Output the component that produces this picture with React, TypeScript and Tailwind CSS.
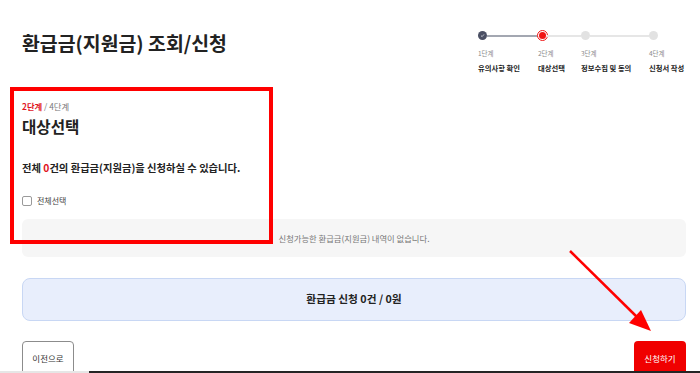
import React from "react";

const STEPS = [
  { num: "1단계", name: "유의사항 확인", w: "w-[60px]", state: "done" },
  { num: "2단계", name: "대상선택", w: "w-[43px]", state: "current" },
  { num: "3단계", name: "정보수집 및 동의", w: "w-[68px]", state: "todo" },
  { num: "4단계", name: "신청서 작성", w: "w-[38px]", state: "todo" },
];

function StepDot({ state }: { state: string }) {
  if (state === "done") {
    return (
      <div className="w-[9px] h-[9px] rounded-full bg-[#4b5064] flex items-center justify-center shrink-0">
        <svg width="5" height="5" viewBox="0 0 10 10">
          <path d="M2 5.2 L4.2 7.3 L8 2.8" fill="none" stroke="#c8ccd6" strokeWidth="1.8" />
        </svg>
      </div>
    );
  }
  if (state === "current") {
    return (
      <div className="w-[9px] h-[9px] flex items-center justify-center shrink-0">
        <div className="w-[11px] h-[11px] shrink-0 rounded-full border border-[#f01515] bg-white flex items-center justify-center">
          <div className="w-[7px] h-[7px] rounded-full bg-[#f01515]" />
        </div>
      </div>
    );
  }
  return <div className="w-[9px] h-[9px] rounded-full bg-[#e2e2e2] shrink-0" />;
}

function Stepper() {
  return (
    <div className="flex mt-[1px] mr-[-1px]">
      {STEPS.map((s, i) => (
        <div key={s.num} className={`${s.w} flex flex-col`}>
          <div className="h-[11px] flex items-center">
            <StepDot state={s.state} />
            {i < STEPS.length - 1 && (
              <div className={`flex-1 h-[2px] ${i === 0 ? "bg-[#a3a7b1]" : "bg-[#e6e6e6]"}`} />
            )}
          </div>
          <div className="mt-[6px] text-[6.5px] leading-[12px] text-[#8a8a8a] whitespace-nowrap">{s.num}</div>
          <div className="mt-[2px] text-[7.3px] leading-[14px] font-bold text-[#222] whitespace-nowrap">{s.name}</div>
        </div>
      ))}
    </div>
  );
}

export default function App() {
  return (
    <div className="relative w-[700px] h-[373px] overflow-hidden bg-white text-[#222] font-['Noto_Sans_CJK_KR','Noto_Sans',sans-serif]">
      <div className="pl-[22px] pr-[14px] pt-[29px]">
        {/* header */}
        <div className="flex justify-between items-start">
          <h1 className="text-[19.4px] leading-[28px] font-bold text-[#222]">
            환급금(지원금) 조회/신청
          </h1>
          <Stepper />
        </div>

        {/* step content */}
        <div className="mt-[25px] text-[8.3px] leading-[12px] text-[#777]">
          <span className="font-bold text-[#e0141e]">2단계</span> / 4단계
        </div>
        <h2 className="mt-[4px] text-[15.6px] leading-[20px] font-bold">대상선택</h2>

        <p className="mt-[25px] text-[10.3px] leading-[14px] font-bold">
          전체 <span className="text-[#e0141e]">0</span>건의 환급금(지원금)을 신청하실 수 있습니다.
        </p>

        <label className="mt-[20px] flex items-center h-[12px] gap-[5px]">
          <span className="w-[10px] h-[10px] rounded-[2px] border border-[#9a9a9a] bg-white" />
          <span className="text-[8px] leading-[12px] text-[#444]">전체선택</span>
        </label>

        <div className="mt-[12px] h-[38px] rounded-[6px] bg-[#f6f6f6] flex items-center justify-center">
          <span className="text-[8.3px] text-[#777]">신청가능한 환급금(지원금) 내역이 없습니다.</span>
        </div>

        <div className="mt-[21px] h-[43px] rounded-[8px] border border-[#c8d7f4] bg-[#e8eefc] flex items-center justify-center">
          <span className="text-[10.7px] font-bold text-[#222]">환급금 신청 0건 / 0원</span>
        </div>

        <div className="mt-[20px] flex justify-between">
          <button className="w-[52px] h-[34px] rounded-[4px] border border-[#8c8c8c] bg-white text-[8.5px] text-[#333]">
            이전으로
          </button>
          <button className="w-[52px] h-[34px] rounded-[4px] bg-[#f00000] text-[8.5px] text-white">
            신청하기
          </button>
        </div>
      </div>

      {/* annotation box */}
      <div className="absolute left-[10px] top-[87px] w-[263px] h-[157px] border-[4px] border-[#ff0000] pointer-events-none" />

      {/* annotation arrow */}
      <svg className="absolute left-0 top-0 pointer-events-none" width="700" height="373">
        <line x1="570" y1="251" x2="638" y2="318" stroke="#ff0000" strokeWidth="2.5" />
        <polygon points="651,331 629,323 641,310" fill="#ff0000" />
      </svg>

      {/* bottom strip */}
      <div className="absolute left-0 bottom-0 w-full h-[2px] flex">
        <div className="w-[89px] bg-[#e6e6e6]" />
        <div className="flex-1 bg-[#252525]" />
      </div>
    </div>
  );
}
